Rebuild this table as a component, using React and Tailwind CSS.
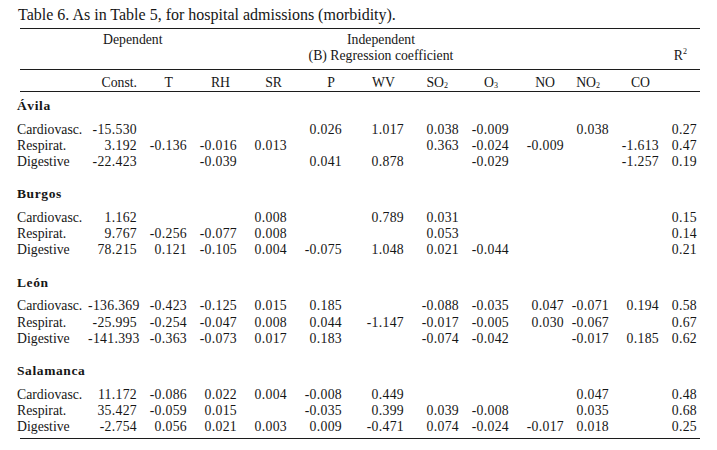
const COLS = [
  { label: 'Const.', pr: 'pr-0' },
  { label: 'T', pr: 'pr-[14px]' },
  { label: 'RH', pr: 'pr-[7px]' },
  { label: 'SR', pr: 'pr-[5px]' },
  { label: 'P', pr: 'pr-[7px]' },
  { label: 'WV', pr: 'pr-[9px]' },
  { label: 'SO', sub: '2', pr: 'pr-[11px]' },
  { label: 'O', sub: '3', pr: 'pr-[11px]' },
  { label: 'NO', pr: 'pr-[9px]' },
  { label: 'NO', sub: '2', pr: 'pr-[9px]' },
  { label: 'CO', pr: 'pr-[9px]' },
  { label: '', pr: 'pr-0' },
]

const SECTIONS = [
  {
    name: 'Ávila',
    rows: [
      ['Cardiovasc.', '-15.530', '', '', '', '0.026', '1.017', '0.038', '-0.009', '', '0.038', '', '0.27'],
      ['Respirat.', '3.192', '-0.136', '-0.016', '0.013', '', '', '0.363', '-0.024', '-0.009', '', '-1.613', '0.47'],
      ['Digestive', '-22.423', '', '-0.039', '', '0.041', '0.878', '', '-0.029', '', '', '-1.257', '0.19'],
    ],
  },
  {
    name: 'Burgos',
    rows: [
      ['Cardiovasc.', '1.162', '', '', '0.008', '', '0.789', '0.031', '', '', '', '', '0.15'],
      ['Respirat.', '9.767', '-0.256', '-0.077', '0.008', '', '', '0.053', '', '', '', '', '0.14'],
      ['Digestive', '78.215', '0.121', '-0.105', '0.004', '-0.075', '1.048', '0.021', '-0.044', '', '', '', '0.21'],
    ],
  },
  {
    name: 'León',
    rows: [
      ['Cardiovasc.', '-136.369', '-0.423', '-0.125', '0.015', '0.185', '', '-0.088', '-0.035', '0.047', '-0.071', '0.194', '0.58'],
      ['Respirat.', '-25.995', '-0.254', '-0.047', '0.008', '0.044', '-1.147', '-0.017', '-0.005', '0.030', '-0.067', '', '0.67'],
      ['Digestive', '-141.393', '-0.363', '-0.073', '0.017', '0.183', '', '-0.074', '-0.042', '', '-0.017', '0.185', '0.62'],
    ],
  },
  {
    name: 'Salamanca',
    rows: [
      ['Cardiovasc.', '11.172', '-0.086', '0.022', '0.004', '-0.008', '0.449', '', '', '', '0.047', '', '0.48'],
      ['Respirat.', '35.427', '-0.059', '0.015', '', '-0.035', '0.399', '0.039', '-0.008', '', '0.035', '', '0.68'],
      ['Digestive', '-2.754', '0.056', '0.021', '0.003', '0.009', '-0.471', '0.074', '-0.024', '-0.017', '0.018', '', '0.25'],
    ],
  },
]

const GRID = 'grid grid-cols-[71px_49px_50px_50px_50px_55px_62px_55px_50px_55px_45px_50px_38px]'

function Rule({ className = '' }) {
  return <div className={'ml-[3px] h-px bg-[#1c1c1c] ' + className} />
}

export default function App() {
  return (
    <div className="w-[717px] h-[450px] bg-white text-[#161616] font-['Liberation_Serif','Times_New_Roman',serif] overflow-hidden">
      <div className="ml-[17px] w-[683px]">
        {/* Caption */}
        <div className="pt-[5px] pl-px text-[16px] leading-[20px]">
          Table 6. As in Table 5, for hospital admissions (morbidity).
        </div>
        <Rule className="mt-[3px]" />

        {/* Grouped header */}
        <div className="flex pt-[3px] text-[13.75px] leading-[16px]">
          <div className="w-[264px] pl-[86px]">Dependent</div>
          <div className="w-[200px] text-center">
            <div>Independent</div>
            <div>(B) Regression coefficient</div>
          </div>
          <div className="flex-1 flex flex-col">
            <div className="h-[16px]" />
            <div className="text-right pr-[13px]">
              R<sup className="text-[8px] top-[-0.7em]">2</sup>
            </div>
          </div>
        </div>
        <Rule className="mt-[5px]" />

        {/* Column names */}
        <div className={GRID + ' pt-[5px] text-[13.75px] leading-[16px]'}>
          <div />
          {COLS.map((c, i) => (
            <div key={i} className={'text-right ' + c.pr}>
              {c.label}
              {c.sub && <sub className="text-[8px] bottom-[-1px]">{c.sub}</sub>}
            </div>
          ))}
        </div>
        <Rule />

        {/* Body */}
        <div className="pt-[6px]">
          {SECTIONS.map((s, si) => (
            <div key={s.name} className={si < SECTIONS.length - 1 ? 'mb-[16px]' : ''}>
              <div className="font-bold text-[13.5px] leading-[16px] tracking-[0.6px] mb-[7.5px]">{s.name}</div>
              {s.rows.map((r, ri) => (
                <div key={ri} className={GRID + ' text-[13.75px] leading-[16.3px]'}>
                  <div className="whitespace-nowrap">{r[0]}</div>
                  {r.slice(1).map((v, vi) => (
                    <div key={vi} className="text-right tracking-[0.3px] whitespace-nowrap">{v}</div>
                  ))}
                </div>
              ))}
            </div>
          ))}
        </div>
        <Rule className="mt-[2.5px]" />
      </div>
    </div>
  )
}
